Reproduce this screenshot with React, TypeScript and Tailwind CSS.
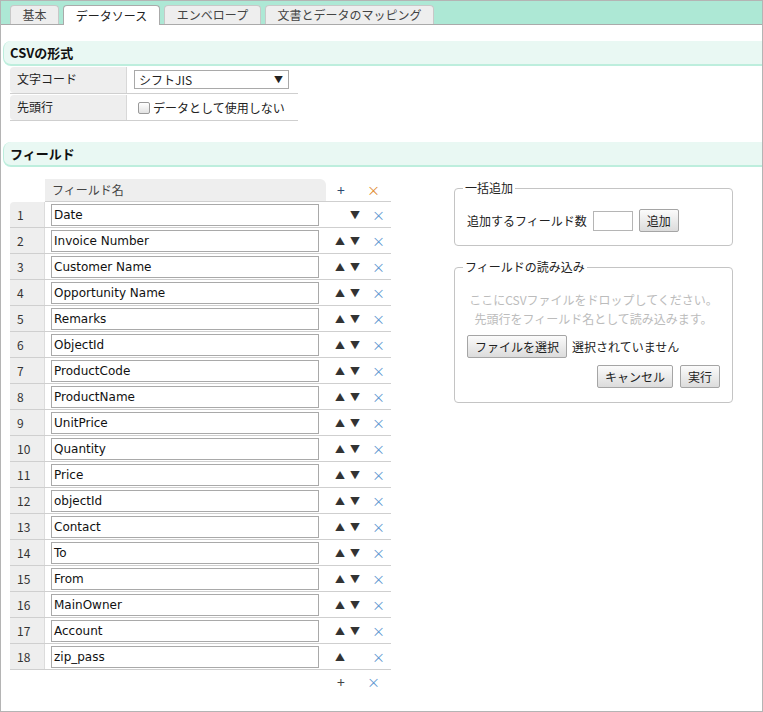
import React from 'react';

const fields = [
  'Date', 'Invoice Number', 'Customer Name', 'Opportunity Name', 'Remarks', 'ObjectId',
  'ProductCode', 'ProductName', 'UnitPrice', 'Quantity', 'Price', 'objectId',
  'Contact', 'To', 'From', 'MainOwner', 'Account', 'zip_pass',
];

const jp = { fontFamily: '"Noto Sans CJK JP", "Noto Sans", sans-serif' };

function Tab({ label, width, active }: { label: string; width: string; active?: boolean }) {
  return (
    <div
      className={`${width} flex items-center justify-center rounded-t-[4px] border border-b-0 text-[12px] leading-none ${
        active ? 'h-[20px] bg-white border-[#aaa] text-[#222] -mb-px' : 'h-[19px] bg-[#eeeeee] border-[#c8c8c8] text-[#444]'
      }`}
    >
      {label}
    </div>
  );
}

function SectionHeader({ title }: { title: string }) {
  return (
    <div className="ml-[2px] h-[25px] rounded-l-[8px] border-l border-b-2 border-[#bdeedd] bg-[#e9f8f3] pl-[6px] flex items-center">
      <span className="text-[13px] font-bold text-[#111] leading-none">{title}</span>
    </div>
  );
}

function Btn({ children, className = '' }: { children: React.ReactNode; className?: string }) {
  return (
    <button
      className={`h-[23px] rounded-[2px] border border-[#a5a5a5] bg-gradient-to-b from-[#fbfbfb] to-[#dcdcdc] text-[12px] text-[#222] leading-none ${className}`}
    >
      {children}
    </button>
  );
}

export default function App() {
  return (
    <div style={jp} className="w-[763px] h-[712px] border border-[#b4b4b4] bg-white overflow-hidden text-[#222]">
      <div className="h-[24px] bg-[#ade8d5] border-b border-[#aaa] flex items-end pl-[9px] gap-[4px]">
        <Tab label="基本" width="w-[49px]" />
        <Tab label="データソース" width="w-[97px]" active />
        <Tab label="エンベロープ" width="w-[97px]" />
        <Tab label="文書とデータのマッピング" width="w-[169px]" />
      </div>

      <div className="mt-[16px]">
        <SectionHeader title="CSVの形式" />
      </div>

      <div className="ml-[9px] w-[288px] mt-[1px]">
        <div className="flex h-[27px] border-b border-[#cfcfcf]">
          <div className="w-[117px] bg-[#eeeeee] rounded-l-[4px] border-r border-[#d8d8d8] pl-[7px] pt-[4px] text-[12px] leading-[16px]">文字コード</div>
          <div className="flex-1 pl-[7px] pt-[3px]">
            <div className="w-[155px] h-[19px] border border-[#a9a9a9] flex items-center justify-between pl-[4px] pr-[5px] text-[12px] leading-none">
              <span>シフトJIS</span>
              <span className="text-[9px]">▼</span>
            </div>
          </div>
        </div>
        <div className="flex h-[26px] border-b border-[#cfcfcf] mt-px">
          <div className="w-[117px] bg-[#eeeeee] rounded-l-[4px] border-r border-[#d8d8d8] pl-[7px] pt-[4px] text-[12px] leading-[16px]">先頭行</div>
          <div className="flex-1 pl-[11px] flex items-center gap-[3px] text-[12px]">
            <span className="w-[12px] h-[12px] border border-[#9a9a9a] rounded-[2px] bg-gradient-to-b from-white to-[#e2e2e2]" />
            <span>データとして使用しない</span>
          </div>
        </div>
      </div>

      <div className="mt-[21px]">
        <SectionHeader title="フィールド" />
      </div>

      <div className="flex mt-[12px]">
        <div className="ml-[9px] w-[381px]">
          <div className="flex h-[23px] border-b border-[#cfcfcf] ml-[35px]">
            <div className="w-[281px] bg-[#eeeeee] rounded-tr-[6px] pl-[7px] flex items-center text-[12px] text-[#444]">フィールド名</div>
            <div className="w-[30px] flex items-center justify-center text-[14px] text-[#2e4a70]">+</div>
            <div className="flex-1 flex items-center justify-center text-[13px] text-[#e08a2e]">×</div>
          </div>
          {fields.map((f, i) => (
            <div key={f + i} className="flex h-[26px] border-b border-[#cfcfcf]">
              <div className={`w-[35px] bg-[#eeeeee] border-r border-[#dcdcdc] pl-[7px] flex items-center text-[12px] text-[#333] ${i === 0 ? 'rounded-tl-[4px]' : ''}`}>
                {i + 1}
              </div>
              <div className="w-[281px] pl-[6px] flex items-center">
                <div className="w-[268px] h-[22px] border border-[#a9a9a9] pl-[2px] flex items-center text-[12px] text-[#111]" style={{ fontFamily: '"DejaVu Sans", sans-serif' }}>
                  {f}
                </div>
              </div>
              <div className="w-[40px] flex items-center text-[10px] text-[#333] pl-[9px]">
                <span className="w-[15px]">{i > 0 ? '▲' : ''}</span>
                <span>{i < fields.length - 1 ? '▼' : ''}</span>
              </div>
              <div className="flex-1 flex items-center justify-center text-[13px] text-[#5d96d0]">×</div>
            </div>
          ))}
          <div className="flex h-[24px] ml-[316px]">
            <div className="w-[30px] flex items-center justify-center text-[14px] text-[#444]">+</div>
            <div className="flex-1 flex items-center justify-center text-[13px] text-[#5d96d0]">×</div>
          </div>
        </div>

        <div className="ml-[63px] w-[279px]">
          <fieldset className="border border-[#c4c4c4] rounded-[4px] px-[12px] pt-[12px] pb-[13px]">
            <legend className="ml-[-4px] px-[2px] text-[12px] leading-[18px]">一括追加</legend>
            <div className="flex items-center text-[12px]">
              <span>追加するフィールド数</span>
              <div className="ml-[6px] w-[40px] h-[20px] border border-[#b5b5b5]" />
              <Btn className="ml-[6px] w-[40px]">追加</Btn>
            </div>
          </fieldset>

          <fieldset className="mt-[12px] border border-[#c4c4c4] rounded-[4px] px-[12px] pt-[14px] pb-[14px]">
            <legend className="ml-[-4px] px-[2px] text-[12px] leading-[18px]">フィールドの読み込み</legend>
            <div className="text-center text-[12px] leading-[19px] text-[#bcbcbc]">
              <div>ここにCSVファイルをドロップしてください。</div>
              <div>先頭行をフィールド名として読み込みます。</div>
            </div>
            <div className="flex items-center mt-[7px] text-[12px]">
              <Btn className="w-[100px]">ファイルを選択</Btn>
              <span className="ml-[5px]">選択されていません</span>
            </div>
            <div className="flex justify-end gap-[7px] mt-[7px]">
              <Btn className="w-[76px]">キャンセル</Btn>
              <Btn className="w-[40px]">実行</Btn>
            </div>
          </fieldset>
        </div>
      </div>
    </div>
  );
}
